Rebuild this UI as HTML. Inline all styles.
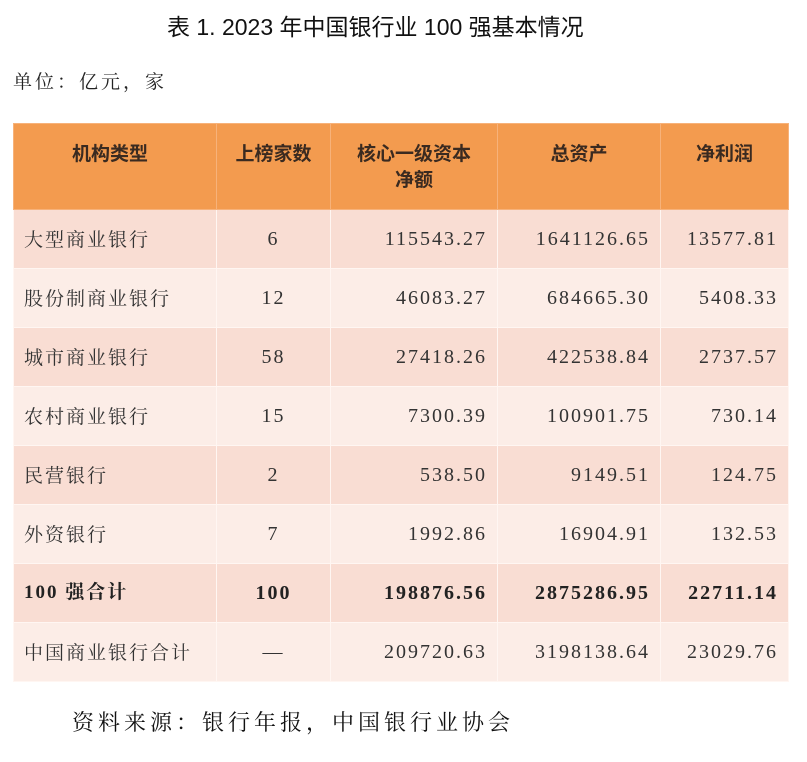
<!DOCTYPE html>
<html><head><meta charset="utf-8"><style>
body{margin:0;width:807px;height:762px;background:#fff;position:relative;overflow:hidden;font-family:"Liberation Serif","Noto Serif CJK SC",serif;color:#333}
.t{position:absolute;white-space:nowrap}
table{position:absolute;left:13px;top:123px;border-collapse:collapse;width:775px;table-layout:fixed}
td{height:59px;font-size:20px;padding:0 12px;border:1px solid #fff6f2;box-sizing:border-box;vertical-align:middle;line-height:24px;letter-spacing:2px}
tr.h td{height:86px;background:#f39b4f;font-family:"Noto Sans CJK SC",sans-serif;font-weight:bold;font-size:19px;color:#3a2a20;text-align:center;vertical-align:top;padding-top:16px;line-height:26px;border-color:#f7b27a;letter-spacing:0}
tr.d td{background:#f9ddd3}
tr.l td{background:#fcede7}
td.r{text-align:right;padding-right:10px}
td.c{text-align:center}
tr.b td{font-weight:bold;color:#222}
td:first-child{padding-left:10px;font-family:"Noto Serif CJK SC",serif;font-size:19px}
tr.b td:first-child{font-family:"Liberation Serif","Noto Serif CJK SC",serif}
</style></head><body>
<div class="t" style="left:167px;top:8px;font-family:'Liberation Sans','Noto Sans CJK SC',sans-serif;font-size:23px;color:#111">表 1. 2023 年中国银行业 100 强基本情况</div>
<div class="t" style="left:13px;top:67px;font-size:19px;font-family:'Noto Serif CJK SC',serif;color:#222;letter-spacing:3px">单位：亿元，家</div>
<table>
<colgroup><col style="width:203px"><col style="width:114px"><col style="width:167px"><col style="width:163px"><col style="width:128px"></colgroup>
<tr class="h"><td style="text-align:left;padding-left:58px;font-family:'Noto Sans CJK SC',sans-serif;font-size:19px;letter-spacing:0">机构类型</td><td style="padding:16px 0 0">上榜家数</td><td>核心一级资本<br>净额</td><td>总资产</td><td>净利润</td></tr>
<tr class="d"><td>大型商业银行</td><td class="c">6</td><td class="r">115543.27</td><td class="r">1641126.65</td><td class="r">13577.81</td></tr>
<tr class="l"><td>股份制商业银行</td><td class="c">12</td><td class="r">46083.27</td><td class="r">684665.30</td><td class="r">5408.33</td></tr>
<tr class="d"><td>城市商业银行</td><td class="c">58</td><td class="r">27418.26</td><td class="r">422538.84</td><td class="r">2737.57</td></tr>
<tr class="l"><td>农村商业银行</td><td class="c">15</td><td class="r">7300.39</td><td class="r">100901.75</td><td class="r">730.14</td></tr>
<tr class="d"><td>民营银行</td><td class="c">2</td><td class="r">538.50</td><td class="r">9149.51</td><td class="r">124.75</td></tr>
<tr class="l"><td>外资银行</td><td class="c">7</td><td class="r">1992.86</td><td class="r">16904.91</td><td class="r">132.53</td></tr>
<tr class="d b"><td>100 强合计</td><td class="c">100</td><td class="r">198876.56</td><td class="r">2875286.95</td><td class="r">22711.14</td></tr>
<tr class="l"><td>中国商业银行合计</td><td class="c">—</td><td class="r">209720.63</td><td class="r">3198138.64</td><td class="r">23029.76</td></tr>
</table>
<div class="t" style="left:72px;top:706px;font-size:22px;font-family:'Noto Serif CJK SC',serif;color:#111;letter-spacing:4px">资料来源：银行年报，中国银行业协会</div>
</body></html>
